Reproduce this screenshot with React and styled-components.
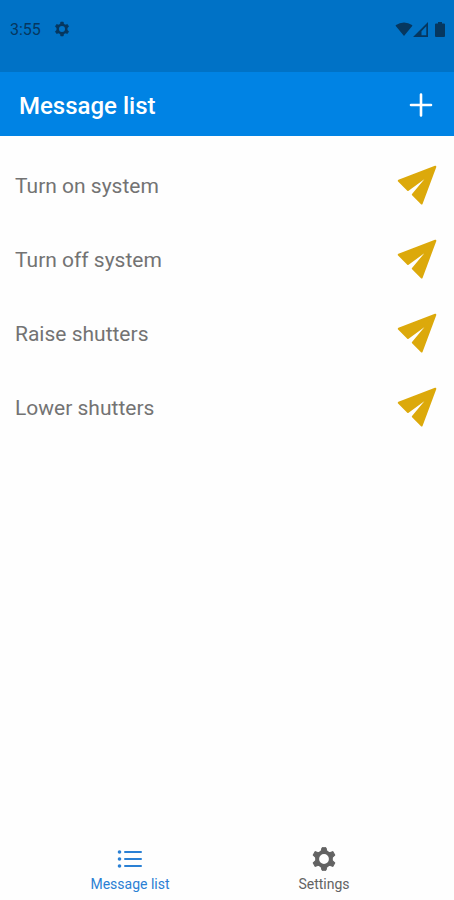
import styled, { createGlobalStyle } from "styled-components";
import { useState } from "react";

const GlobalStyle = createGlobalStyle`
  * {
    box-sizing: border-box;
  }

  body {
    margin: 0;
    background: #fefefe;
    font-family: Roboto, "Liberation Sans", sans-serif;
  }

  button {
    padding: 0;
    border: none;
    background: none;
    font-family: inherit;
    cursor: pointer;
  }

  svg {
    display: block;
  }
`;

const Screen = styled.div`
  display: flex;
  flex-direction: column;
  min-height: 100vh;
`;

const StatusBar = styled.div`
  display: flex;
  justify-content: space-between;
  align-items: flex-start;
  height: 72px;
  padding: 20px 9px 0 10px;
  background: #0072c6;
  color: #06375f;
`;

const StatusGroup = styled.div`
  display: flex;
  align-items: center;
  gap: ${({ $gap }) => $gap};
  height: 18px;
`;

const Time = styled.span`
  font-size: 16px;
  line-height: 18px;
  padding-top: 2px;
`;

const Header = styled.header`
  display: flex;
  justify-content: space-between;
  align-items: center;
  height: 64px;
  padding: 2px 20px 0 19px;
  background: #0083e4;
  color: #fff;
`;

const Title = styled.h1`
  margin: 0;
  padding-top: 2px;
  font-size: 24px;
  font-weight: 500;
  line-height: 28px;
`;

const AddButton = styled.button`
  color: #fff;
`;

const List = styled.ul`
  flex: 1;
  margin: 0;
  padding: 12px 17px 12px 15px;
  list-style: none;
`;

const Row = styled.li`
  display: flex;
  justify-content: space-between;
  align-items: center;
  height: 74px;
`;

const Name = styled.span`
  padding-top: 2px;
  font-size: 21px;
  line-height: 28px;
  color: #737373;
`;

const SendButton = styled.button`
  color: #dca90b;
`;

const Nav = styled.nav`
  display: flex;
  padding: 8px 33px 6px;
`;

const NavButton = styled.button`
  display: flex;
  flex: 1;
  flex-direction: column;
  align-items: center;
  gap: 2px;
  font-size: 14px;
  line-height: 20px;
  color: ${({ $active }) => ($active ? "#2a80d4" : "#636363")};
`;

function GearIcon({ size }) {
  return (
    <svg width={size} height={size} viewBox="0 0 26 26" fill="currentColor">
      <circle
        cx="13"
        cy="13"
        r="6.900"
        fill="none"
        stroke="currentColor"
        strokeWidth="4"
      />
      {[0, 60, 120, 180, 240, 300].map((angle) => (
        <path
          key={angle}
          d="M11 1.700H15L16 6H10Z"
          stroke="currentColor"
          strokeWidth="1"
          strokeLinejoin="round"
          transform={`rotate(${angle} 13 13)`}
        />
      ))}
    </svg>
  );
}

function WifiIcon() {
  return (
    <svg width="18" height="14" viewBox="0 0 18 14" fill="currentColor">
      <path d="M9 14 .8 4Q.4 3.400 1 3Q4.600 .4 9 .4T17 3Q17.600 3.400 17.200 4Z" />
    </svg>
  );
}

function SignalIcon() {
  return (
    <svg width="15" height="15" viewBox="0 0 15 15" fill="currentColor">
      <path
        fillRule="evenodd"
        d="M0 15 15 0V15ZM8.500 9.200V13.300H13.300V4.200Z"
      />
    </svg>
  );
}

function BatteryIcon() {
  return (
    <svg width="10" height="15" viewBox="0 0 10 15" fill="currentColor">
      <path d="M3 0H7V1.500H9Q10 1.500 10 2.500V14Q10 15 9 15H1Q0 15 0 14V2.500Q0 1.500 1 1.500H3Z" />
    </svg>
  );
}

function PlusIcon() {
  return (
    <svg width="26" height="26" viewBox="0 0 26 26">
      <path
        d="M13 2.500V23.500M3 13H23"
        stroke="currentColor"
        strokeWidth="2.600"
        strokeLinecap="round"
      />
    </svg>
  );
}

function PlaneIcon() {
  return (
    <svg
      width="40"
      height="40"
      viewBox="0 0 40 40"
      fill="currentColor"
      stroke="currentColor"
      strokeWidth="2"
      strokeLinejoin="round"
    >
      <path d="M38.300 1.800 1.800 15.800 11 25 33.500 8.500 15.800 29.600 24.700 38.500Z" />
    </svg>
  );
}

function ListIcon() {
  return (
    <svg width="26" height="26" viewBox="0 0 26 26" fill="currentColor">
      {[6, 13, 20].map((y) => (
        <g key={y}>
          <circle cx="2.500" cy={y} r="1.800" />
          <rect x="7" y={y - 1} width="18" height="2" rx="1" />
        </g>
      ))}
    </svg>
  );
}

const messages = [
  "Turn on system",
  "Turn off system",
  "Raise shutters",
  "Lower shutters",
];

function MessageRow({ name }) {
  return (
    <Row>
      <Name>{name}</Name>
      <SendButton aria-label={`Send ${name}`}>
        <PlaneIcon />
      </SendButton>
    </Row>
  );
}

function App() {
  const [tab, setTab] = useState("list");

  return (
    <>
      <GlobalStyle />
      <Screen>
        <StatusBar>
          <StatusGroup $gap="13px">
            <Time>3:55</Time>
            <GearIcon size={16} />
          </StatusGroup>
          <StatusGroup $gap="0">
            <WifiIcon />
            <StatusGroup $gap="7px">
              <SignalIcon />
              <BatteryIcon />
            </StatusGroup>
          </StatusGroup>
        </StatusBar>

        <Header>
          <Title>Message list</Title>
          <AddButton aria-label="Add message">
            <PlusIcon />
          </AddButton>
        </Header>

        <List>
          {messages.map((name) => (
            <MessageRow key={name} name={name} />
          ))}
        </List>

        <Nav>
          <NavButton $active={tab === "list"} onClick={() => setTab("list")}>
            <ListIcon />
            Message list
          </NavButton>
          <NavButton
            $active={tab === "settings"}
            onClick={() => setTab("settings")}
          >
            <GearIcon size={26} />
            Settings
          </NavButton>
        </Nav>
      </Screen>
    </>
  );
}

export default App;
